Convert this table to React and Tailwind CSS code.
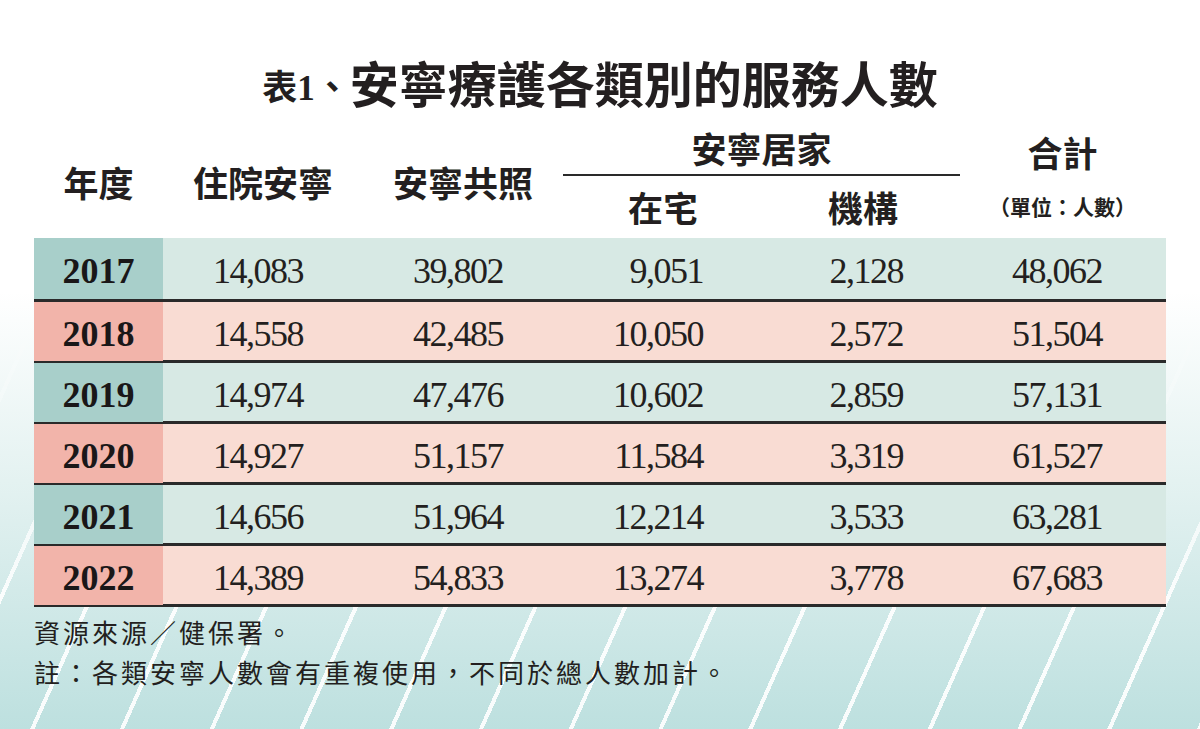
import React from 'react';

const rows = [
  { year: '2017', tone: 'teal', values: ['14,083', '39,802', '9,051', '2,128', '48,062'] },
  { year: '2018', tone: 'pink', values: ['14,558', '42,485', '10,050', '2,572', '51,504'] },
  { year: '2019', tone: 'teal', values: ['14,974', '47,476', '10,602', '2,859', '57,131'] },
  { year: '2020', tone: 'pink', values: ['14,927', '51,157', '11,584', '3,319', '61,527'] },
  { year: '2021', tone: 'teal', values: ['14,656', '51,964', '12,214', '3,533', '63,281'] },
  { year: '2022', tone: 'pink', values: ['14,389', '54,833', '13,274', '3,778', '67,683'] },
];

const cols = 'grid grid-cols-[129px_200px_200px_200px_200px_199px]';

const DataRow = ({ row, first }) => {
  const teal = row.tone === 'teal';
  return (
    <div
      className={`${cols} ${first ? 'h-[64px]' : 'h-[61px]'} border-b-[3px] border-[#2a2a2a] ${
        teal ? 'bg-[#d7e9e4]' : 'bg-[#f9dcd3]'
      }`}
    >
      <div
        className={`flex items-center justify-center pt-[5px] font-['Liberation_Serif',serif] text-[36px] font-bold text-[#1a1718] ${
          teal ? 'bg-[#a8cfca]' : 'bg-[#f2b4aa]'
        }`}
      >
        {row.year}
      </div>
      {row.values.map((v, i) => (
        <div
          key={i}
          className="flex items-center justify-end pr-[60px] pt-[5px] font-['Liberation_Serif',serif] text-[36px] tracking-[-1.5px]"
        >
          {v}
        </div>
      ))}
    </div>
  );
};

const App = () => {
  return (
    <div className="relative h-[729px] w-[1200px] overflow-hidden bg-[linear-gradient(to_bottom,#ffffff_0%,#ffffff_40%,#e4f2f1_66%,#bde0df_100%)] font-['Noto_Sans_CJK_TC',sans-serif] text-[#231f20]">
      {/* diagonal light stripes in the background */}
      <div className="pointer-events-none absolute inset-0 bg-[repeating-linear-gradient(114deg,transparent_0px,transparent_78px,rgba(255,255,255,0.9)_78px,rgba(255,255,255,0.9)_82px)] [mask-image:linear-gradient(to_bottom,transparent_42%,black_82%)]" />

      <div className="relative w-[1200px] px-[34px] pt-[57px]">
        <h1 className="flex h-[65px] items-start justify-center font-bold">
          <span className="mt-[10px] text-[35px] leading-none">
            表<span className="font-['Liberation_Serif',serif]">1</span>、
          </span>
          <span className="text-[49px] leading-none">安寧療護各類別的服務人數</span>
        </h1>

        <div className={`${cols} grid-rows-[54px_62px] font-bold`}>
          <div className="col-start-1 row-span-2 row-start-1 flex items-center justify-center pt-[4px] text-[35px]">年度</div>
          <div className="col-start-2 row-span-2 row-start-1 flex items-center justify-center pt-[4px] text-[35px]">住院安寧</div>
          <div className="col-start-3 row-span-2 row-start-1 flex items-center justify-center pt-[4px] text-[35px]">安寧共照</div>
          <div className="col-span-2 col-start-4 row-start-1 mr-[3px] flex items-center justify-center border-b-2 border-[#2a2a2a] text-[35px]">
            安寧居家
          </div>
          <div className="col-start-6 row-start-1 flex items-center justify-center pt-[6px] text-[35px]">合計</div>
          <div className="col-start-4 row-start-2 flex items-center justify-center text-[35px]">在宅</div>
          <div className="col-start-5 row-start-2 flex items-center justify-center text-[35px]">機構</div>
          <div className="col-start-6 row-start-2 flex items-center justify-center text-[21px]">（單位：人數）</div>
        </div>

        <div>
          {rows.map((row, i) => (
            <DataRow key={row.year} row={row} first={i === 0} />
          ))}
        </div>

        <div className="mt-[5px] text-[26px] leading-[40px] tracking-[3px]">
          <p>資源來源／健保署。</p>
          <p>註：各類安寧人數會有重複使用，不同於總人數加計。</p>
        </div>
      </div>
    </div>
  );
};

export default App;
